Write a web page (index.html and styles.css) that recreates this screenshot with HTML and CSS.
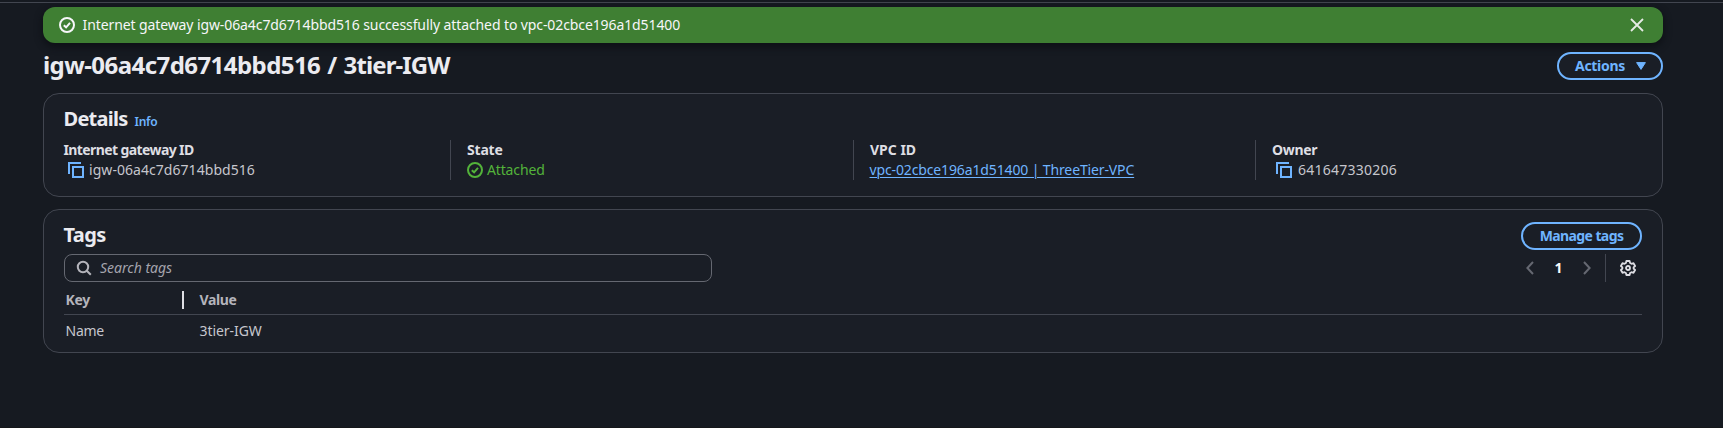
FILE: index.html
```
<!DOCTYPE html>
<html lang="en">
<head>
<meta charset="utf-8">
<title>Internet gateway</title>
<link rel="stylesheet" href="styles.css">
</head>
<body>
<div class="topline"></div>
<main class="page">
  <div class="flash" role="status">
    <svg class="icon" viewBox="0 0 16 16"><circle cx="8" cy="8" r="7"/><path d="M4.8 8.2l2.3 2.1 3.9-4.4"/></svg>
    <span class="flash-text">Internet gateway igw-06a4c7d6714bbd516 successfully attached to vpc-02cbce196a1d51400</span>
    <svg class="icon close" viewBox="0 0 16 16"><path d="M2 2l12 12M14 2L2 14"/></svg>
  </div>

  <header class="page-header">
    <h1>igw-06a4c7d6714bbd516 / <span class="gateway-name">3tier-IGW</span></h1>
    <button class="button"><span class="actions-label">Actions</span><svg class="caret" viewBox="0 0 10 8"><path d="M.6.6h8.8L5 7.4z"/></svg></button>
  </header>

  <section class="card details">
    <div class="card-title"><h2 class="details-title">Details</h2><a class="info">Info</a></div>
    <dl class="columns">
      <div class="column">
        <dt class="label-gateway">Internet gateway ID</dt>
        <dd class="copy gateway"><svg class="icon" viewBox="0 0 16 16"><path d="M1 12V1h12M5 5h10v10H5z"/></svg><span>igw-06a4c7d6714bbd516</span></dd>
      </div>
      <div class="column">
        <dt class="label-state">State</dt>
        <dd class="status"><svg class="icon" viewBox="0 0 16 16"><circle cx="8" cy="8" r="7"/><path d="M4.8 8.2l2.3 2.1 3.9-4.4"/></svg><span>Attached</span></dd>
      </div>
      <div class="column">
        <dt>VPC ID</dt>
        <dd><a class="link">vpc-02cbce196a1d51400 | ThreeTier-VPC</a></dd>
      </div>
      <div class="column">
        <dt class="label-owner">Owner</dt>
        <dd class="copy owner"><svg class="icon" viewBox="0 0 16 16"><path d="M1 12V1h12M5 5h10v10H5z"/></svg><span>641647330206</span></dd>
      </div>
    </dl>
  </section>

  <section class="card tags">
    <div class="tags-header"><h2 class="tags-title">Tags</h2><button class="button manage">Manage tags</button></div>
    <div class="tools">
      <div class="search"><svg class="icon" viewBox="0 0 16 16"><circle cx="7" cy="7" r="5.2"/><path d="M10.8 10.8l4 4"/></svg><span>Search tags</span></div>
      <div class="pagination">
        <svg class="chevron" viewBox="0 0 8 14"><path d="M7 1L1.4 7 7 13"/></svg>
        <span class="page-number">1</span>
        <svg class="chevron" viewBox="0 0 8 14"><path d="M1 1l5.6 6L1 13"/></svg>
        <span class="separator"></span>
        <svg class="icon gear" viewBox="0 0 16 16"><path d="M6.4 1h3.2l.5 2 1.4.8 2-.6 1.6 2.8-1.5 1.4v1.2l1.5 1.4-1.6 2.8-2-.6-1.4.8-.5 2H6.4l-.5-2-1.4-.8-2 .6L.9 10l1.5-1.4V7.4L.9 6l1.6-2.8 2 .6L5.9 3z"/><circle cx="8" cy="8" r="2"/></svg>
      </div>
    </div>
    <div class="table">
      <div class="row head"><span class="cell key">Key</span><span class="cell value">Value</span></div>
      <div class="row"><span class="cell name">Name</span><span class="cell tag-value">3tier-IGW</span></div>
    </div>
  </section>
</main>
</body>
</html>
```
FILE: styles.css
```
* { box-sizing: border-box; }
body {
  margin: 0;
  height: 428px;
  overflow: hidden;
  background: #161a21;
  border-bottom: 1px solid #15171a;
  color: #c6c6cd;
  font: 14px/20px "Noto Sans", sans-serif;
}
h1, h2, dl, dd { margin: 0; }
svg { display: block; flex: none; fill: none; stroke: currentColor; stroke-width: 2; }
.icon { width: 16px; height: 16px; }
.topline { height: 3px; border-bottom: 1px solid #424650; background: #161a21; }
.page { width: 1620px; margin: 4px 0 0 43px; }

.flash {
  display: flex;
  align-items: center;
  height: 36px;
  padding: 0 18px 0 16px;
  border-radius: 12px;
  background: #3f7f33;
  color: #f6f6f9;
  box-shadow: 0 3px 7px 1px #0e1116;
}
.flash-text { margin-left: 7.5px; letter-spacing: -.1px; }
.close { margin-left: auto; color: #e6ebe6; stroke-width: 1.8; }

.page-header { display: flex; align-items: center; justify-content: space-between; height: 46px; margin-bottom: 4px; }
h1 { padding-bottom: 2px; font-size: 24px; line-height: 30px; letter-spacing: -.56px; word-spacing: 1.3px; color: #ebebf0; }
.gateway-name { letter-spacing: -.9px; }
.button {
  display: flex;
  align-items: center;
  height: 28px;
  padding: 0 15px 0 16px;
  border: 2px solid #6fb4ff;
  border-radius: 14px;
  background: #1a1e26;
  color: #6fb4ff;
  font: 700 14px/20px "Noto Sans", sans-serif;
}
.actions-label { width: 61px; text-align: left; letter-spacing: -.3px; }
.caret { width: 10px; height: 8px; fill: currentColor; stroke-width: 1; stroke-linejoin: round; }

.card { border: 1px solid #424650; border-radius: 16px; background: #1a1e26; }
.details { height: 104px; padding: 11px 20px 0; }
.card-title { display: flex; align-items: baseline; height: 35px; }
h2 { font-size: 20px; line-height: 28px; color: #ebebf0; }
.details-title { margin-left: -.5px; letter-spacing: -.75px; }
.info { margin-left: 7px; color: #6fb4ff; font-size: 12px; font-weight: 600; letter-spacing: -.25px; }
.columns { display: grid; grid-template-columns: 386px 403px 402px 387px; height: 40px; }
.column + .column { padding-left: 16px; border-left: 1px solid #424650; }
dt { font-weight: 700; color: #dedee3; }
.label-gateway { margin-left: -.5px; letter-spacing: -.6px; }
.label-state { letter-spacing: -.2px; }
.label-owner { letter-spacing: -.3px; }
dd { display: flex; align-items: center; height: 20px; }
.copy svg { margin: 0 5px 0 4px; color: #6fb4ff; }
.gateway { letter-spacing: .05px; }
.owner { letter-spacing: .25px; }
.owner svg { margin-right: 6px; }
.status { color: #53b33a; letter-spacing: -.15px; }
.status svg { margin-right: 4px; }
.link { margin-left: -.5px; color: #6fb4ff; letter-spacing: -.13px; text-decoration: underline; text-underline-offset: 2px; text-decoration-thickness: 1px; }

.tags { height: 144px; margin-top: 12px; padding: 12px 20px 0; }
.tags-header { display: flex; align-items: flex-start; justify-content: space-between; height: 32px; }
.tags-title { margin-left: -.5px; line-height: 25px; letter-spacing: -.6px; }
.manage { width: 121px; justify-content: center; padding: 0; letter-spacing: -.6px; }
.tools { display: flex; align-items: center; justify-content: space-between; height: 28px; }
.search {
  display: flex;
  align-items: center;
  width: 648px;
  height: 28px;
  padding-left: 11px;
  border: 1px solid #656871;
  border-radius: 8px;
  font-style: italic;
  color: #a4a4ad;
}
.search svg { margin-right: 8px; color: #b4b4bb; }
.pagination { display: flex; align-items: center; padding-right: 6px; }
.chevron { width: 8px; height: 14px; color: #656871; }
.page-number { width: 49px; text-align: center; font-weight: 700; color: #f9f9fa; }
.separator { width: 1px; height: 28px; margin: 0 14px 0 14px; background: #424650; }
.gear { color: #dedee3; stroke-width: 1.8; stroke-linejoin: round; }
.row { display: grid; grid-template-columns: 134px 1fr; padding-left: 1.5px; height: 32px; line-height: 32px; }
.head { height: 33px; line-height: 35px; border-bottom: 1px solid #424650; font-weight: 700; color: #b4b4bb; }
.key { background: linear-gradient(#dedee3, #dedee3) 116.5px 9px / 2px 18px no-repeat; }
.key, .name { letter-spacing: -.25px; }
.value { letter-spacing: -.4px; }
.tag-value { letter-spacing: -.06px; }
```
